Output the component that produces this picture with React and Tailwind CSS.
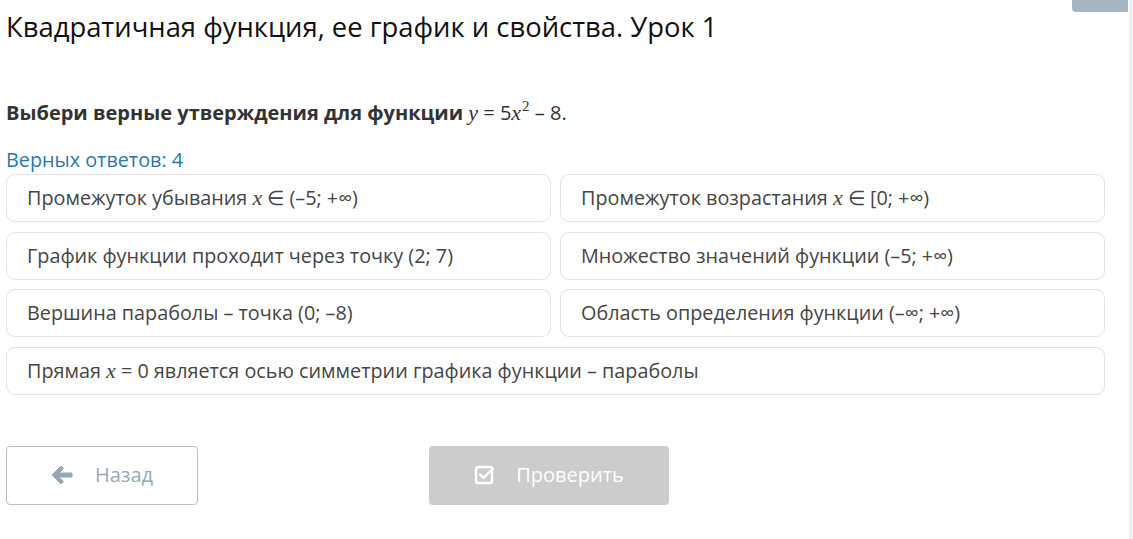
import React from "react";

const M = ({ children }) => (
  <span className="italic text-[22px] leading-none" style={{ fontFamily: '"Liberation Serif", "DejaVu Serif", serif' }}>
    {children}
  </span>
);

const options = [
  [<>Промежуток убывания <M>x</M> ∈ (–5; +∞)</>, <>Промежуток возрастания <M>x</M> ∈ [0; +∞)</>],
  [<>График функции проходит через точку (2; 7)</>, <>Множество значений функции (–5; +∞)</>],
  [<>Вершина параболы – точка (0; –8)</>, <>Область определения функции (–∞; +∞)</>],
];

const Card = ({ children, className = "" }) => (
  <div className={"h-[48px] flex items-center pl-[20px] border border-[#e3e3e3] rounded-[9px] bg-white text-[19.8px] text-[#454545] " + className}>
    <span className="leading-[26px]">{children}</span>
  </div>
);

export default function App() {
  return (
    <div
      className="relative w-[1133px] h-[539px] bg-white overflow-hidden"
      style={{ fontFamily: '"Open Sans", "Noto Sans", sans-serif' }}
    >
      <div className="absolute top-0 right-[5px] w-[56px] h-[12px] bg-[#a6b6c0] rounded-bl-[4px]" />
      <div className="absolute top-0 right-0 w-[4px] h-full bg-[#eef0f4]" />

      <div className="pl-[6px] w-[1105px]">
        <h1 className="pt-[9px] text-[27.4px] leading-[36px] text-[#111]">
          Квадратичная функция, ее график и свойства. Урок 1
        </h1>

        <p className="mt-[55px] text-[20px] leading-[26px] text-[#333]">
          <span className="font-bold">Выбери верные утверждения для функции </span>
          <M>y</M> = 5<M>x</M>
          <span className="relative -top-[9px] text-[15px] leading-none pl-[1px]" style={{ fontFamily: '"Liberation Serif", serif' }}>2</span> – 8.
        </p>

        <p className="mt-[21px] text-[19.8px] leading-[26px] text-[#2a78ab]">Верных ответов: 4</p>

        <div className="mt-[1px] flex flex-col gap-[9.5px]">
          {options.map((row, i) => (
            <div key={i} className="grid grid-cols-2 gap-[9px]">
              <Card>{row[0]}</Card>
              <Card>{row[1]}</Card>
            </div>
          ))}
          <Card>
            Прямая <M>x</M> = 0 является осью симметрии графика функции – параболы
          </Card>
        </div>

        <div className="mt-[51px] flex items-center">
          <button className="w-[192px] h-[59px] border border-[#b9bfc4] rounded-[4px] flex items-center justify-center gap-[22px] text-[20px] text-[#93a9b6]">
            <svg width="22" height="20" viewBox="0 0 22 20" fill="#93a9b6">
              <path d="M10 1 L1 10 L10 19 L12.5 16.5 L8 12 L21 12 L21 8 L8 8 L12.5 3.5 Z" strokeLinejoin="round" stroke="#93a9b6" strokeWidth="1" />
            </svg>
            <span>Назад</span>
          </button>
          <button className="ml-[231px] w-[240px] h-[59px] bg-[#cccccc] rounded-[4px] flex items-center justify-center gap-[20px] text-[20px] text-white">
            <svg width="22" height="22" viewBox="0 0 22 22" fill="none" stroke="white" strokeWidth="2.4">
              <rect x="2" y="3" width="16" height="16" rx="2" />
              <path d="M6 10.5l3.5 3.5L19 4.5" strokeLinecap="round" strokeLinejoin="round" />
            </svg>
            <span>Проверить</span>
          </button>
        </div>
      </div>
    </div>
  );
}
